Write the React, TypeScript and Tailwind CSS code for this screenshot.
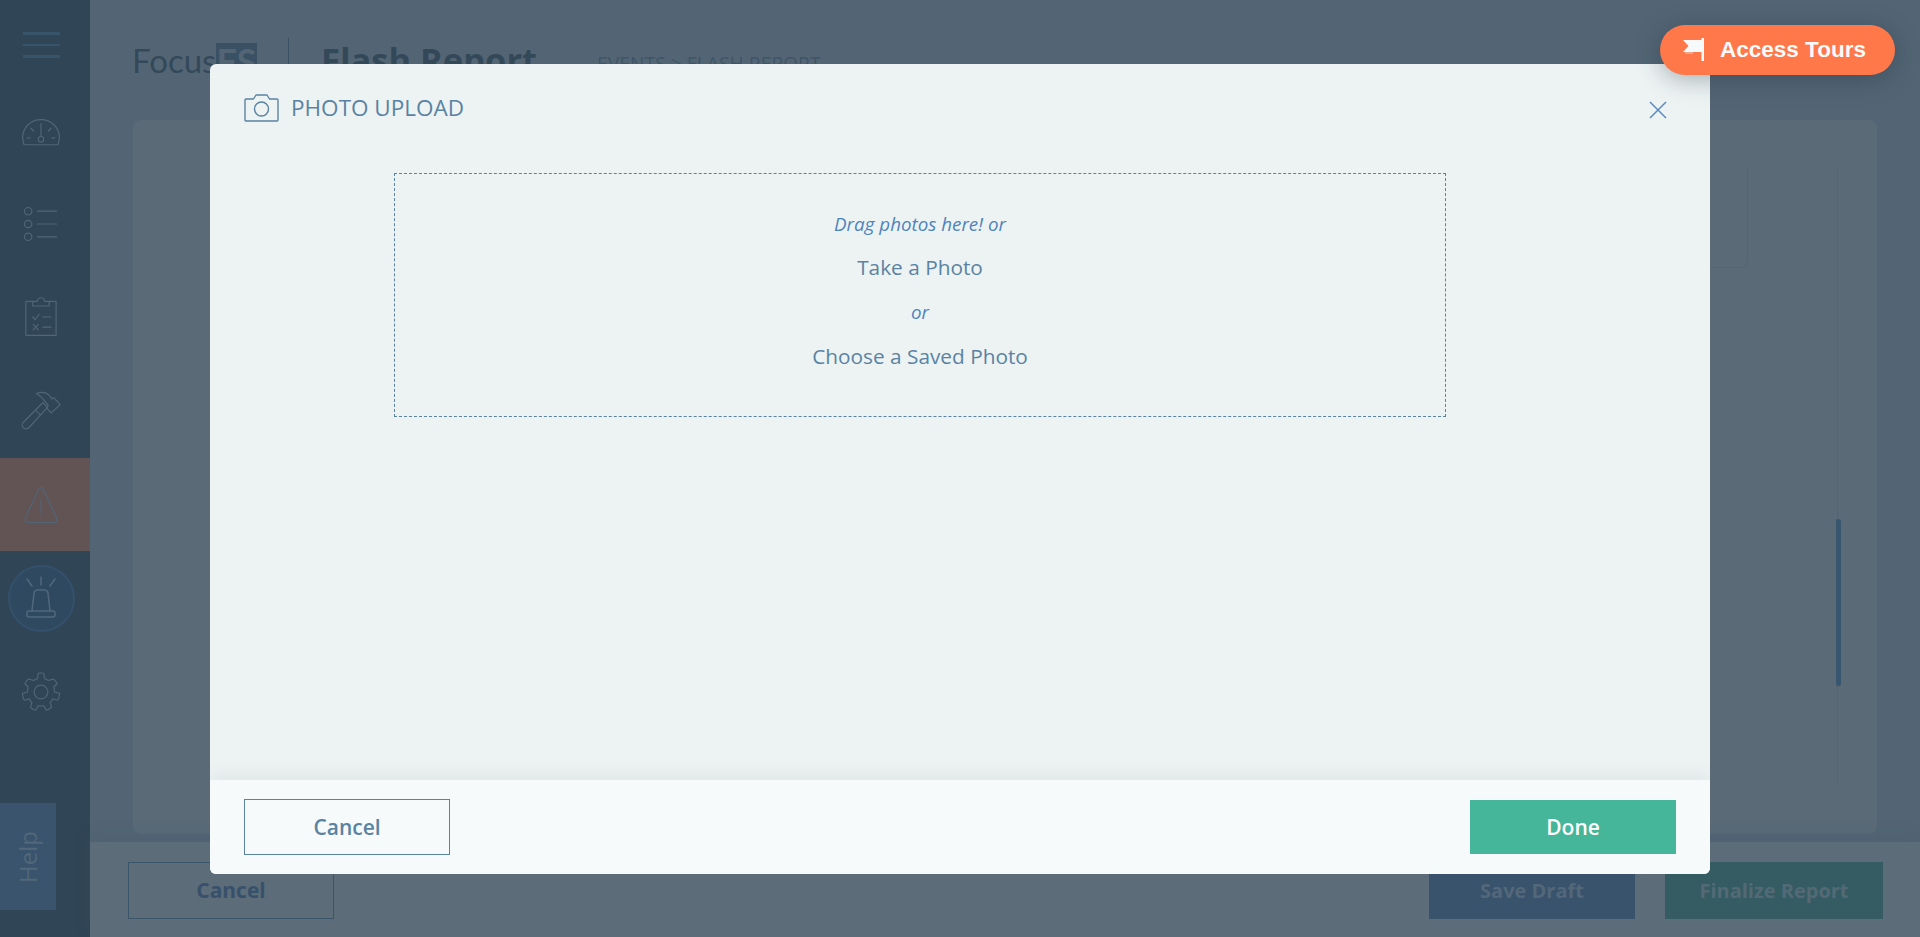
import React from "react";

const sans = "font-['Open_Sans','Noto_Sans',sans-serif]";

function SideIcon({ children }: { children: React.ReactNode }) {
  return (
    <svg width="44" height="44" viewBox="0 0 48 48" fill="none" stroke="#506677" strokeWidth="1.3" strokeLinecap="round" strokeLinejoin="round">
      {children}
    </svg>
  );
}

export default function App() {
  return (
    <div className={`relative flex h-[937px] w-full overflow-hidden bg-[#536574] ${sans}`}>
      <aside className="flex w-[90px] shrink-0 flex-col bg-[#304555]">
        <div className="flex h-[84px] flex-col gap-[9px] pl-[23px] pt-[32px]">
          <div className="h-[2.5px] w-[37px] bg-[#38546a]" />
          <div className="h-[2.5px] w-[37px] bg-[#38546a]" />
          <div className="h-[2.5px] w-[37px] bg-[#38546a]" />
        </div>
        <div className="flex h-[93px] items-center justify-center pr-[8px]">
          <SideIcon>
            <path d="M5.500 39 C4.500 36 4 33 4 31 C4 20 13 11.500 24 11.500 C35 11.500 44 20 44 31 C44 33 43.500 36 42.500 39 Z" />
            <circle cx="24" cy="33" r="3" />
            <path d="M24 30 V16 M9 31.500 H12 M36 31.500 H39 M13 21 L16 24 M35 21 L32 24" />
          </SideIcon>
        </div>
        <div className="flex h-[93px] items-center justify-center pr-[8px]">
          <SideIcon>
            <circle cx="10" cy="10" r="4" />
            <circle cx="10" cy="24" r="4" />
            <circle cx="10" cy="38" r="4" />
            <path d="M20 10 H41 M20 24 H41 M20 38 H41" />
          </SideIcon>
        </div>
        <div className="flex h-[94px] items-center justify-center pr-[8px]">
          <SideIcon>
            <path d="M15 7 H7.500 V44 H40.500 V7 H33" />
            <path d="M15 7 H20 C20.500 4 22.500 3 24 3 C25.500 3 27.500 4 28 7 H33 V12 H15 Z" />
            <path d="M15 24 L17.500 27 L22 21 M26 24 H35 M15.500 32 L21 38 M21 32 L15.500 38 M26 35 H35" />
          </SideIcon>
        </div>
        <div className="flex h-[94px] items-center justify-center pr-[8px]">
          <SideIcon>
            <path d="M19 5 C26 2 30 4 33 7 L36 11 L38 9.500 L45 17 L35 26 L30 20.500 L32 18 L27 12 C25 9 22 7 19 5 Z" />
            <path d="M26 15 L31 20 L11 42 C9 44 6 44 4.500 42 C3 40.500 3 38 5 36 Z" />
            <path d="M18 23 L23 28" />
          </SideIcon>
        </div>
        <div className="flex h-[93px] items-center justify-center bg-[#625355] pr-[8px]">
          <SideIcon>
            <path d="M24 5 C25 5 26 6 26.500 7 L41 38 C42 41 41 43 39 43 H9 C7 43 6 41 7 38 L21.500 7 C22 6 23 5 24 5 Z" />
            <path d="M24 18 V32 M24 35 V36" />
          </SideIcon>
        </div>
        <div className="flex h-[94px] items-center justify-center pr-[8px]">
          <div className="flex h-[67px] w-[67px] items-center justify-center rounded-full border-2 border-[#34506a] bg-[#2f4a60]">
            <svg width="34" height="46" viewBox="0 0 34 46" fill="none" stroke="#52687a" strokeWidth="1.5" strokeLinecap="round" strokeLinejoin="round">
              <path d="M8 36 L10 18 C10.500 16 12 15 14 15 H20 C22 15 23.500 16 24 18 L26 36" />
              <rect x="3" y="36" width="28" height="6" rx="2" />
              <path d="M17 2 V10 M3 4 L8 11 M31 4 L26 11" />
            </svg>
          </div>
        </div>
        <div className="flex h-[93px] items-center justify-center pr-[8px]">
          <SideIcon>
            <circle cx="24" cy="24" r="7.500" />
            <path d="M21 4 C21 3 22 3 24 3 C26 3 27 3 27 4 L28 9.500 C29.500 10 31 10.800 32 11.500 L37 10 C38.500 10 41 13 41.500 15 L38 18.500 C38.500 20.500 38.700 22 38.700 24 L44 25.500 C44.500 27 43.500 32 42 33 L37 31.500 C36 33 35 34.500 34 35.500 L35.500 40.500 C34 42.500 30.500 44 29.500 43.500 L27 39 C25.500 39.300 23 39.300 21 39 L18.500 43.500 C17 44 14 42.500 12.500 40.500 L14 35.500 C13 34.500 12 33 11 31.500 L6 33 C4.500 32 3.500 27 4 25.500 L9.300 24 C9.300 22 9.500 20.500 10 18.500 L6.500 15 C7 13 9.500 10 11 10 L16 11.500 C17 10.800 18.500 10 20 9.500 Z" />
          </SideIcon>
        </div>
        <div className="mt-[65px] flex h-[107px] w-[56px] items-center justify-center bg-[#39546c]">
          <span className="rotate-180 text-[24px] leading-none text-[#526779] [writing-mode:vertical-rl]">Help</span>
        </div>
      </aside>

      <main className="flex min-w-0 flex-1 flex-col">
        <div className="flex h-[120px] items-start pl-[42px] pt-[36px]">
          <span className="w-[84px] font-['Lato',sans-serif] text-[33px] leading-[48px] text-[#33495a]">Focus</span>
          <span className="mt-[7px] h-[32px] w-[41px] bg-[#3a5165] text-center font-['Lato',sans-serif] text-[36px] leading-[36px] font-bold text-[#536574]">FS</span>
          <div className="ml-[31px] mt-[2px] h-[28px] w-px bg-[#3a5165]" />
          <span className="ml-[32px] text-[34.500px] leading-[48px] font-bold text-[#33495a]">Flash Report</span>
          <span className="ml-[60px] mt-[16px] text-[19.300px] leading-[24px] text-[#3f5568]">EVENTS &gt; FLASH REPORT</span>
        </div>
        <div className="flex-1 pl-[43px] pr-[43px]">
          <div className="relative h-[714px] rounded-[8px] bg-[#5a6a77]">
            <div className="absolute right-[39px] top-[48px] h-[617px] w-px bg-[#536472]" />
            <div className="absolute right-[36px] top-[399px] h-[167px] w-[5px] rounded-[2px] bg-[#38566f]" />
            <div className="absolute right-[129px] top-[48px] h-[100px] w-[300px] rounded-br-[6px] border-b border-r border-[#556673]" />
          </div>
        </div>
        <footer className="relative flex h-[95px] items-start justify-between bg-[#5c6c79] pl-[38px] pr-[37px] pt-[20px] font-bold shadow-[0_-6px_14px_rgba(60,85,110,0.18)]">
          <button className="h-[57px] w-[206px] border border-[#3a5468] text-[21px] text-[#38516a]">Cancel</button>
          <div className="flex gap-[30px] text-[20px]">
            <button className="h-[57px] w-[206px] bg-[#38536b] text-[#53677a]">Save Draft</button>
            <button className="h-[57px] w-[218px] bg-[#355c63] text-[#536a76]">Finalize Report</button>
          </div>
        </footer>
      </main>

      <div className="absolute left-[210px] top-[64px] flex h-[810px] w-[1500px] flex-col overflow-hidden rounded-[6px] bg-[#edf3f3]">
        <div className="flex h-[109px] items-start justify-between pl-[34px] pr-[43px] pt-[29px]">
          <div className="flex items-center gap-[12px]">
            <svg width="35" height="28" viewBox="0 0 35 28" fill="none" stroke="#5a83a3" strokeWidth="1.4" strokeLinejoin="round">
              <path d="M1 6 C1 5.500 1.500 5 2 5 H9.500 L12 1 H23 L25.500 5 H33 C33.500 5 34 5.500 34 6 V26 C34 26.500 33.500 27 33 27 H2 C1.500 27 1 26.500 1 26 Z" />
              <circle cx="17.500" cy="15" r="7" />
            </svg>
            <span className="text-[22.500px] leading-[30px] text-[#5a83a3]">PHOTO UPLOAD</span>
          </div>
          <svg className="mt-[8px]" width="18" height="18" viewBox="0 0 18 18" stroke="#5a8ac0" strokeWidth="1.5" fill="none">
            <path d="M1 1 L17 17 M17 1 L1 17" />
          </svg>
        </div>
        <div className="flex-1 pl-[184px]">
          <div className="flex h-[244px] w-[1052px] flex-col items-center border border-dashed border-[#5a83a3] pt-[28px] text-center">
            <span className="flex h-[44px] items-center text-[18.800px] italic text-[#4f83bd]">Drag photos here! or</span>
            <span className="flex h-[44px] items-center text-[20.800px] text-[#5a83a3]">Take a Photo</span>
            <span className="flex h-[44px] items-center text-[18.800px] italic text-[#4f83bd]">or</span>
            <span className="flex h-[46px] items-center text-[20.800px] text-[#5a83a3]">Choose a Saved Photo</span>
          </div>
        </div>
        <div className="relative flex h-[94px] items-start justify-between bg-[#f6fafb] pl-[34px] pr-[34px] pt-[19px] text-[21px] font-semibold shadow-[0_-6px_16px_rgba(60,90,100,0.07)]">
          <button className="h-[56px] w-[206px] border border-[#5a83a3] pt-[2px] text-[#5a83a3]">Cancel</button>
          <button className="mt-[1px] h-[54px] w-[206px] bg-[#45b699] pt-[2px] text-white">Done</button>
        </div>
      </div>

      <button className="absolute left-[1660px] top-[25px] flex h-[50px] w-[235px] items-center gap-[16px] rounded-full bg-[#ff7849] pl-[23px] font-['Liberation_Sans',sans-serif] text-[22.500px] font-bold text-[#f8fbfc] shadow-[0_4px_24px_rgba(30,45,60,0.35)]">
        <svg width="21" height="24" viewBox="0 0 21 24">
          <path d="M2 12 H10 V16 H2 Z" fill="#f0a488" />
          <path d="M0 2 H19 V14 H0 L5.500 8 Z" fill="#f6fafb" />
          <path d="M18.500 0 H21 V23 H18.500 Z" fill="#f6fafb" />
        </svg>
        Access Tours
      </button>
    </div>
  );
}
